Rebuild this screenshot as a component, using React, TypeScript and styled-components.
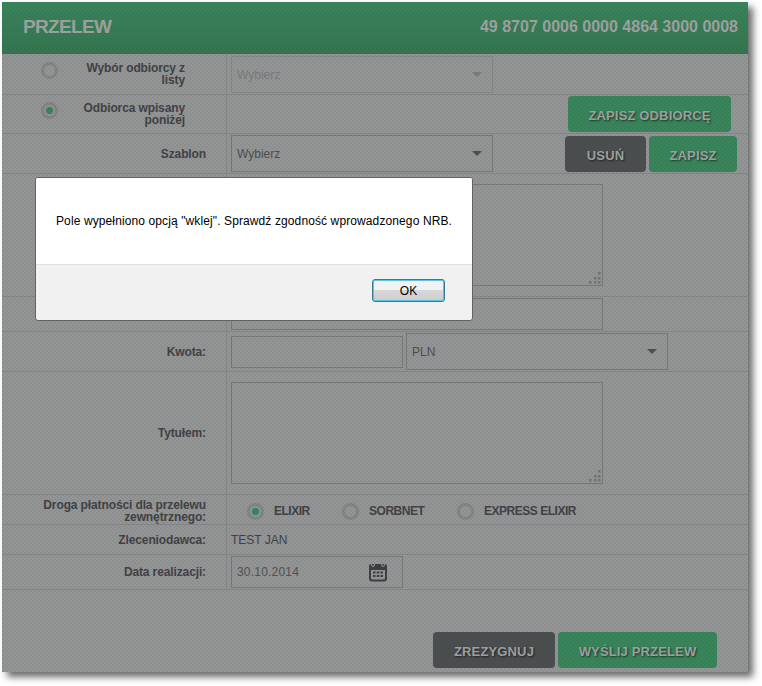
import React from 'react';
import styled, { createGlobalStyle, css } from 'styled-components';

const Global = createGlobalStyle`
  * { box-sizing: border-box; }
  body { margin: 0; background: #fff; overflow: hidden; font-family: "Liberation Sans", Arial, sans-serif; }
`;

const weave = css`
  background-image: radial-gradient(circle at 1px 1px, rgba(60, 60, 80, 0.1) 0.6px, transparent 1.2px),
    radial-gradient(circle at 3px 3px, rgba(60, 60, 80, 0.1) 0.6px, transparent 1.2px);
  background-size: 4px 4px;
`;

const Page = styled.div`
  height: 686px;
  padding: 2px;
`;

const Panel = styled.main`
  position: relative;
  width: 746px;
  height: 670px;
  background: #949595;
  box-shadow: 5px 5px 7px rgba(0, 0, 0, 0.58);
  font-size: 12px;
  color: #3f4144;
`;

const Weave = styled.div`
  position: absolute;
  inset: 0;
  ${weave}
  pointer-events: none;
`;

const Header = styled.header`
  display: flex;
  align-items: center;
  justify-content: space-between;
  height: 52px;
  padding: 0 10px 2px 21px;
  background: linear-gradient(#38855a, #33754f);
  color: #a0a3a1;
  font-weight: bold;
`;

const Title = styled.h1`
  margin: 0;
  font-size: 19px;
  letter-spacing: -0.65px;
`;

const Account = styled.span`
  font-size: 16px;
  letter-spacing: 0;
`;

const Row = styled.div<{ $h: number }>`
  display: grid;
  grid-template-columns: 225px 1fr;
  height: ${p => p.$h}px;
  border-bottom: 1px solid #858787;
`;

const LabelCell = styled.div<{ $inset?: boolean }>`
  display: flex;
  align-items: center;
  justify-content: ${p => (p.$inset ? 'space-between' : 'flex-end')};
  padding: 0 ${p => (p.$inset ? 41 : 20)}px 0 ${p => (p.$inset ? 39 : 0)}px;
  border-right: 1px solid #858787;
`;

const Label = styled.span<{ $w?: number }>`
  width: ${p => (p.$w ? `${p.$w}px` : 'auto')};
  font-weight: bold;
  line-height: 12px;
  letter-spacing: -0.12px;
  text-align: right;
`;

const Cell = styled.div<{ $pt?: number; $pr?: number }>`
  display: flex;
  align-items: flex-start;
  gap: 3px;
  padding: ${p => p.$pt ?? 1}px ${p => p.$pr ?? 0}px 0 4px;
`;

const Radio = styled.span<{ $on?: boolean }>`
  flex: none;
  width: 17px;
  height: 17px;
  border: 3px solid #848585;
  border-radius: 50%;
  background: ${p => (p.$on ? 'radial-gradient(circle, #38855a 3.2px, transparent 4px)' : 'transparent')};
  margin-bottom: 7px;
`;

const Select = styled.div<{ $off?: boolean }>`
  display: flex;
  align-items: center;
  justify-content: space-between;
  width: 262px;
  height: 37px;
  padding: 0 10px 0 5px;
  border: 1px solid ${p => (p.$off ? '#868888' : '#777979')};
  color: ${p => (p.$off ? '#7a7c7c' : '#4c4e50')};
`;

const Caret = styled.i`
  border: 5px solid transparent;
  border-top-color: currentColor;
  border-bottom: 0;
`;

const Input = styled.div<{ $w?: number }>`
  display: flex;
  align-items: center;
  justify-content: space-between;
  width: ${p => p.$w ?? 372}px;
  height: 32px;
  padding: 0 15px 0 5px;
  border: 1px solid #777979;
  color: #505254;
  letter-spacing: 0.2px;
`;

const Area = styled.div`
  display: flex;
  align-items: flex-end;
  justify-content: flex-end;
  width: 372px;
  height: 102px;
  padding: 0 1px 1px 0;
  border: 1px solid #777979;
`;

const Choice = styled.div<{ $w: number }>`
  display: flex;
  align-items: center;
  gap: 10px;
  width: ${p => p.$w}px;
  height: 31px;
  font-weight: bold;
  letter-spacing: -0.48px;
  & > ${Radio} { margin-bottom: -2px; }
`;

const Push = styled.div`
  flex: 1;
`;

const Button = styled.div<{ $w: number; $dark?: boolean }>`
  display: flex;
  align-items: center;
  justify-content: center;
  width: ${p => p.$w}px;
  height: 36px;
  padding-top: 3px;
  border-radius: 4px;
  background: ${p => (p.$dark ? '#4a4e4f' : '#38855a')};
  color: #a1a3a2;
  font-size: 13px;
  font-weight: bold;
  letter-spacing: 0.15px;
  text-shadow: 1px 1px 2px rgba(0, 0, 0, 0.6);
  white-space: nowrap;
`;

const ButtonPair = styled.div`
  display: flex;
  gap: 3px;
  padding-top: 1px;
`;

const AmountSlot = styled.div`
  padding-top: 3px;
`;

const Choices = styled.div`
  display: flex;
  padding-left: 20px;
  white-space: nowrap;
`;

const Footer = styled.footer`
  display: flex;
  justify-content: flex-end;
  gap: 3px;
  padding: 42px 31px 0 0;
`;

const Dialog = styled.section`
  position: absolute;
  left: 33px;
  top: 175px;
  width: 438px;
  height: 144px;
  border: 1px solid #636363;
  border-radius: 3px;
  background: #f1f1f1;
  color: #000;
  overflow: hidden;
`;

const Message = styled.p`
  margin: 0;
  height: 87px;
  padding: 35px 0 0 20px;
  border-bottom: 1px solid #e0e0e0;
  background: #fff;
  line-height: 16px;
  letter-spacing: 0.11px;
  white-space: nowrap;
`;

const Ok = styled.button`
  display: block;
  width: 73px;
  height: 23px;
  margin: 14px 27px 0 auto;
  padding: 0;
  border: 1px solid #34799a;
  border-radius: 3px;
  background: linear-gradient(#f2f2f2 0 48%, #d8d8d8 50%, #cdcdcd);
  box-shadow: inset 0 0 0 1px #5cc4e3;
  font: 12px "Liberation Sans", Arial, sans-serif;
  line-height: 20px;
`;

const GRIP_DOTS = [[9, 0], [5, 5], [9, 5], [0, 9], [5, 9], [9, 9]];

const Grip = () => (
  <svg width="12" height="12" fill="#737575">
    {GRIP_DOTS.map(([x, y]) => (
      <rect key={`${x}-${y}`} x={x} y={y} width="2.500" height="2.500" />
    ))}
  </svg>
);

const Calendar = () => (
  <svg width="18" height="19" viewBox="0 0 18 19">
    <path fill="#3c3e40" fillRule="evenodd" d="M2 1h14q2 0 2 2v12.500q0 3-3 3H3q-3 0-3-3V3q0-2 2-2zm0 6v8q0 1.500 1.500 1.500h11q1.500 0 1.500-1.500V7z" />
    <path fill="#3c3e40" d="M4 8.500h2.500v2H4zm3.750 0h2.500v2h-2.500zm3.750 0H14v2h-2.500zM4 12h2.500v2H4zm3.750 0h2.500v2h-2.500zm3.750 0H14v2h-2.500z" />
    <g fill="#3c3e40" stroke="#949595" strokeWidth="1"><circle cx="4" cy="2" r="1.500" /><circle cx="14" cy="2" r="1.500" /></g>
  </svg>
);

export default function App() {
  return (
    <Page>
      <Global />
      <Panel>
        <Header>
          <Title>PRZELEW</Title>
          <Account>49 8707 0006 0000 4864 3000 0008</Account>
        </Header>
        <Row $h={41}>
          <LabelCell $inset><Radio /><Label $w={110}>Wybór odbiorcy z listy</Label></LabelCell>
          <Cell $pt={2}><Select $off>Wybierz<Caret /></Select></Cell>
        </Row>
        <Row $h={39}>
          <LabelCell $inset><Radio $on /><Label $w={110}>Odbiorca wpisany poniżej</Label></LabelCell>
          <Cell $pr={17}><Push /><Button $w={163}>ZAPISZ ODBIORCĘ</Button></Cell>
        </Row>
        <Row $h={40}>
          <LabelCell><Label>Szablon</Label></LabelCell>
          <Cell $pr={11}>
            <Select>Wybierz<Caret /></Select>
            <Push />
            <ButtonPair><Button $w={81} $dark>USUŃ</Button><Button $w={88}>ZAPISZ</Button></ButtonPair>
          </Cell>
        </Row>
        <Row $h={123}>
          <LabelCell />
          <Cell $pt={10}><Area><Grip /></Area></Cell>
        </Row>
        <Row $h={35}>
          <LabelCell />
          <Cell><Input /></Cell>
        </Row>
        <Row $h={40}>
          <LabelCell><Label>Kwota:</Label></LabelCell>
          <Cell><AmountSlot><Input $w={172} /></AmountSlot><Select>PLN<Caret /></Select></Cell>
        </Row>
        <Row $h={123}>
          <LabelCell><Label>Tytułem:</Label></LabelCell>
          <Cell $pt={10}><Area><Grip /></Area></Cell>
        </Row>
        <Row $h={30}>
          <LabelCell><Label $w={180}>Droga płatności dla przelewu zewnętrznego:</Label></LabelCell>
          <Choices>
            <Choice $w={95}><Radio $on />ELIXIR</Choice>
            <Choice $w={115}><Radio />SORBNET</Choice>
            <Choice $w={150}><Radio />EXPRESS ELIXIR</Choice>
          </Choices>
        </Row>
        <Row $h={30}>
          <LabelCell><Label>Zleceniodawca:</Label></LabelCell>
          <Cell $pt={8}>TEST JAN</Cell>
        </Row>
        <Row $h={35}>
          <LabelCell><Label>Data realizacji:</Label></LabelCell>
          <Cell><Input $w={172}>30.10.2014<Calendar /></Input></Cell>
        </Row>
        <Footer>
          <Button $w={122} $dark>ZREZYGNUJ</Button>
          <Button $w={159}>WYŚLIJ PRZELEW</Button>
        </Footer>
        <Weave />
        <Dialog role="dialog">
          <Message>Pole wypełniono opcją "wklej". Sprawdź zgodność wprowadzonego NRB.</Message>
          <Ok>OK</Ok>
        </Dialog>
      </Panel>
    </Page>
  );
}
